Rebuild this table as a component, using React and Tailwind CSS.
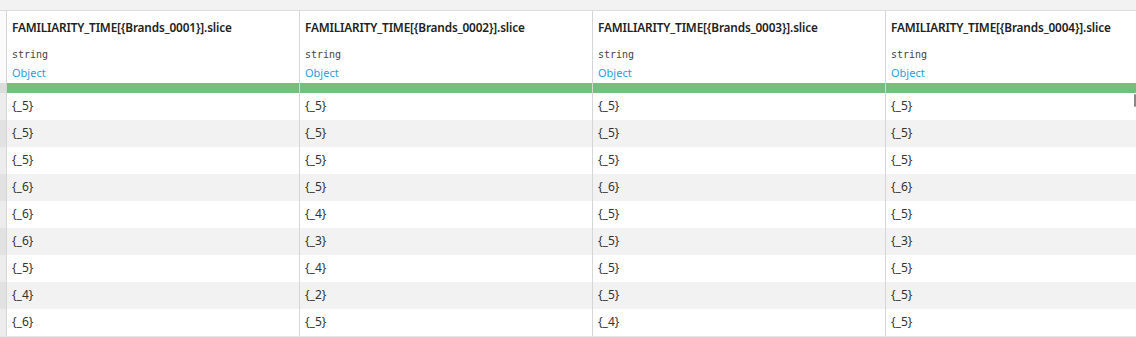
import React from "react";

const cols = [
  { name: "FAMILIARITY_TIME[{Brands_0001}].slice", vals: [5, 5, 5, 6, 6, 6, 5, 4, 6] },
  { name: "FAMILIARITY_TIME[{Brands_0002}].slice", vals: [5, 5, 5, 5, 4, 3, 4, 2, 5] },
  { name: "FAMILIARITY_TIME[{Brands_0003}].slice", vals: [5, 5, 5, 6, 5, 5, 5, 5, 4] },
  { name: "FAMILIARITY_TIME[{Brands_0004}].slice", vals: [5, 5, 5, 6, 5, 3, 5, 5, 5] },
];

const font = { fontFamily: '"Noto Sans", "Open Sans", sans-serif' };

export default function App() {
  return (
    <div className="w-[1136px] h-[337px] overflow-hidden bg-white relative" style={font}>
      <div className="h-[11px] bg-[#f2f2f2] border-b border-[#dcdcdc]" />
      <div className="flex">
        <div className="w-[6px] shrink-0 flex flex-col">
          <div className="h-[72px] bg-[#fafafa]" />
          <div className="h-[10px] bg-[#dcdcdc]" />
          {cols[0].vals.map((_, i) => (
            <div key={i} className={i % 2 === 0 ? "h-[27px] bg-[#ececec]" : "h-[27px] bg-[#e2e2e2]"} />
          ))}
        </div>
        {cols.map((c, ci) => (
          <div key={ci} className="w-[293px] shrink-0 border-l border-[#d6d6d6] flex flex-col">
            <div className="h-[72px] pl-[5px] flex flex-col">
              <div className="h-[35px] pt-[7px] text-[11.8px] font-semibold text-[#222] leading-[18px] whitespace-nowrap tracking-[-0.15px]">
                {c.name}
              </div>
              <div
                className="h-[17px] text-[10px] text-[#444] leading-[17px]"
                style={{ fontFamily: '"DejaVu Sans Mono", monospace' }}
              >
                string
              </div>
              <div className="h-[20px] pt-[2px] text-[11px] text-[#1f9fd8] leading-[16px]">Object</div>
            </div>
            <div className="h-[10px] bg-[#74bf7e]" />
            {c.vals.map((v, i) => (
              <div
                key={i}
                className={
                  (i % 2 === 0 ? "bg-white" : "bg-[#f2f2f2]") +
                  " h-[27px] pl-[5px] pb-[1px] flex items-center text-[12px] text-[#333] leading-none"
                }
              >
                {"{_" + v + "}"}
              </div>
            ))}
          </div>
        ))}
      </div>
      <div className="absolute left-0 right-0 top-[336px] h-px bg-[#e6e6e6]" />
      <div className="absolute left-[1134px] top-[94px] w-[2px] h-[13px] bg-[#8a8a8a] rounded-sm" />
    </div>
  );
}
